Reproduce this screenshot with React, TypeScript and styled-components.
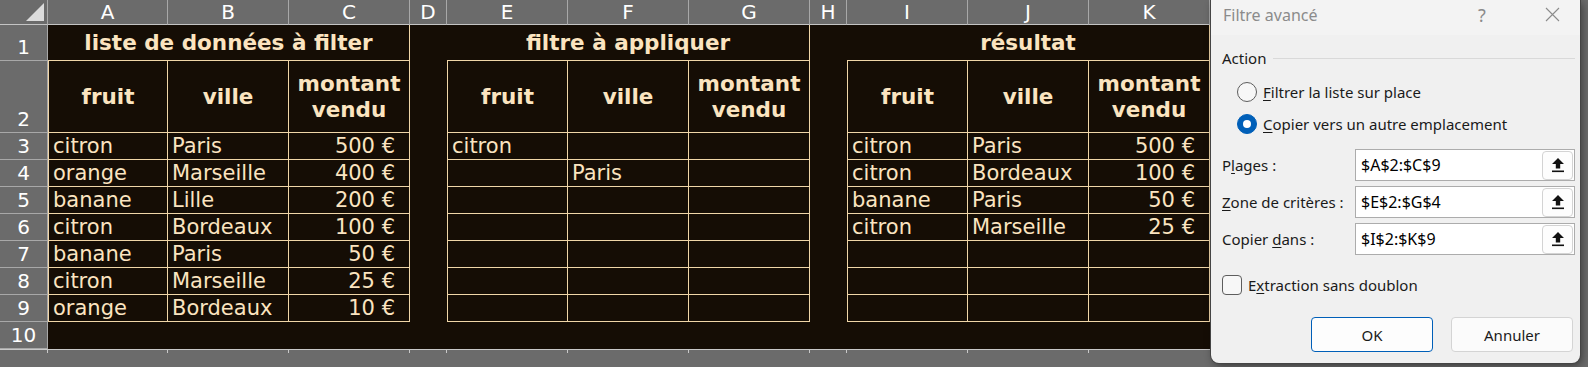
import React from 'react'
import styled, { createGlobalStyle } from 'styled-components'

const GlobalStyle = createGlobalStyle`
  html, body {
    margin: 0;
    padding: 0;
    background: #6b6b6b;
  }
  body {
    width: 1588px;
    height: 367px;
    overflow: hidden;
  }
`

const PEACH = '#f0d6a8'
const INK = '#fbe4c0'
const DARK = '#150d05'
const HEAD = '#6b6b6b'
const HEAD_LINE = '#a8a8a8'

interface CellProps {
  $first?: boolean
  $boxed?: boolean
  $align?: 'left' | 'right' | 'center'
  $bold?: boolean
  $span?: number
}

const Screen = styled.div`
  position: relative;
  width: 1588px;
  height: 367px;
  background: ${HEAD};
`

const Sheet = styled.div`
  display: grid;
  grid-template-columns: 48px 120px 121px 121px 37px repeat(3, 121px) 37px repeat(3, 121px);
  grid-template-rows: 25px 36px 72px repeat(8, 27px) 1fr;
  width: 1210px;
  height: 367px;
  font-family: "DejaVu Sans", Verdana, sans-serif;
`

const Corner = styled.div`
  position: relative;
  background: ${HEAD};
  border-right: 1px solid ${HEAD_LINE};
  border-bottom: 1px solid #c4c4c4;

  &::after {
    content: "";
    position: absolute;
    right: 3px;
    bottom: 3px;
    width: 0;
    height: 0;
    border-left: 18px solid transparent;
    border-bottom: 18px solid #dcdcdc;
  }
`

const ColHead = styled.div`
  display: flex;
  align-items: center;
  justify-content: center;
  background: ${HEAD};
  color: #ffffff;
  font-size: 20px;
  border-right: 1px solid ${HEAD_LINE};
  border-bottom: 1px solid #c4c4c4;
  box-sizing: border-box;
`

const RowHead = styled.div`
  display: flex;
  align-items: flex-end;
  justify-content: center;
  background: ${HEAD};
  color: #ffffff;
  font-size: 20px;
  line-height: 25px;
  border-right: 1px solid ${HEAD_LINE};
  border-bottom: 1px solid ${HEAD_LINE};
  box-sizing: border-box;
`

const Cell = styled.div<CellProps>`
  display: flex;
  align-items: center;
  justify-content: ${p => (p.$align === 'right' ? 'flex-end' : p.$align === 'center' ? 'center' : 'flex-start')};
  text-align: center;
  grid-column: span ${p => p.$span ?? 1};
  box-sizing: border-box;
  background: ${DARK};
  color: ${INK};
  font-size: ${p => (p.$bold ? '21.5px' : '21px')};
  font-weight: ${p => (p.$bold ? 'bold' : 'normal')};
  line-height: 26px;
  white-space: nowrap;
  overflow: hidden;
  padding: ${p => (p.$align === 'right' ? '0 14px 0 0' : p.$align === 'center' ? '0' : '0 0 0 4px')};
  border-right: ${p => (p.$boxed ? `1px solid ${PEACH}` : 'none')};
  border-bottom: ${p => (p.$boxed ? `1px solid ${PEACH}` : 'none')};
  border-left: ${p => (p.$boxed && p.$first ? `1px solid ${PEACH}` : 'none')};
`

const Blank = styled.div`
  position: relative;
  background: ${HEAD};
  border-top: 1px solid #c8c8c8;

  &::before {
    content: "";
    position: absolute;
    left: -1px;
    top: 0;
    width: 1px;
    height: 3px;
    background: #c8c8c8;
  }
`

/* ---------- dialog ---------- */

const Dialog = styled.div`
  position: absolute;
  left: 1211px;
  top: 0;
  width: 369px;
  height: 363px;
  display: flex;
  flex-direction: column;
  background: #f0f0f0;
  border-radius: 0 0 8px 8px;
  box-shadow: 0 0 0 1px #454545, 2px 3px 8px rgba(0, 0, 0, 0.45);
  font-family: "Segoe UI", "Noto Sans", sans-serif;
  font-size: 15px;
  color: #1a1a1a;
  overflow: hidden;
`

const TitleBar = styled.div`
  display: flex;
  align-items: center;
  height: 35px;
  padding: 0 5px 6px 12px;
  box-sizing: border-box;
  background: #f3f3f3;
  color: #8b8b8b;
  font-size: 16px;
`

const TitleText = styled.div`
  flex: 1;
`

const Help = styled.div`
  width: 24px;
  text-align: center;
  font-size: 18px;
  margin-right: 35px;
`

const Close = styled.div`
  width: 46px;
  display: flex;
  justify-content: center;
`

const Body = styled.div`
  display: flex;
  flex-direction: column;
  padding: 0 5px 0 11px;
`

const GroupRow = styled.div`
  display: flex;
  align-items: center;
  height: 20px;
  margin-top: 13px;
`

const GroupLine = styled.div`
  flex: 1;
  height: 1px;
  margin-left: 7px;
  background: #d9d9d9;
`

const OptionRow = styled.div<{ $top?: number }>`
  display: flex;
  align-items: center;
  height: 32px;
  margin-top: ${p => p.$top ?? 0}px;
  padding-left: 15px;
`

const Radio = styled.span<{ $on?: boolean }>`
  display: flex;
  flex-shrink: 0;
  align-items: center;
  justify-content: center;
  width: 20px;
  height: 20px;
  box-sizing: border-box;
  border-radius: 50%;
  margin-right: 6px;
  border: 1px solid ${p => (p.$on ? '#005fb8' : '#5d5d5d')};
  background: ${p => (p.$on ? '#005fb8' : '#f7f7f7')};

  &::after {
    content: "";
    display: ${p => (p.$on ? 'block' : 'none')};
    width: 8px;
    height: 8px;
    border-radius: 50%;
    background: #ffffff;
  }
`

const U = styled.span`
  text-decoration: underline;
  text-underline-offset: 2px;
`

const FieldRow = styled.div<{ $top: number }>`
  display: flex;
  align-items: center;
  height: 32px;
  margin-top: ${p => p.$top}px;
`

const FieldLabel = styled.div`
  width: 133px;
`

const Input = styled.div`
  flex: 1;
  display: flex;
  align-items: center;
  height: 32px;
  box-sizing: border-box;
  padding: 0 1px 0 5px;
  border: 1px solid #acacac;
  background: #ffffff;
  font-size: 16px;
  color: #000;
`

const InputValue = styled.div`
  flex: 1;
`

const PickButton = styled.div`
  display: flex;
  align-items: center;
  justify-content: center;
  width: 31px;
  height: 29px;
  box-sizing: border-box;
  border: 1px solid #d3d3d3;
  border-radius: 4px;
  background: #fdfdfd;
`

const CheckRow = styled.div`
  display: flex;
  align-items: center;
  height: 20px;
  margin-top: 20px;
`

const Check = styled.span`
  flex-shrink: 0;
  width: 20px;
  height: 20px;
  box-sizing: border-box;
  border: 1px solid #5d5d5d;
  border-radius: 4px;
  background: #f7f7f7;
  margin-right: 6px;
`

const ButtonRow = styled.div`
  display: flex;
  justify-content: flex-end;
  gap: 18px;
  margin-top: 22px;
  padding-right: 2px;
`

const Button = styled.div<{ $primary?: boolean }>`
  display: flex;
  align-items: center;
  justify-content: center;
  width: 122px;
  height: 35px;
  box-sizing: border-box;
  border-radius: 4px;
  border: 1px solid ${p => (p.$primary ? '#005fb8' : '#d4d4d4')};
  background: ${p => (p.$primary ? '#fdfdfd' : '#fbfbfb')};
  font-size: 15px;
`

const UpArrow = () => (
  <svg width="12" height="15" viewBox="0 0 12 15">
    <polygon points="6,0 12,6 8.2,6 8.2,10.5 3.8,10.5 3.8,6 0,6" fill="#111" />
    <rect x="0" y="12.5" width="12" height="1.6" fill="#111" />
  </svg>
)

const CloseIcon = () => (
  <svg width="15" height="15" viewBox="0 0 15 15">
    <path d="M1 1 L14 14 M14 1 L1 14" stroke="#8b8b8b" strokeWidth="1.1" fill="none" />
  </svg>
)

/* ---------- data ---------- */

type Row = [string, string, string]

const tables: { title: string; rows: Row[] }[] = [
  {
    title: 'liste de données à filter',
    rows: [
      ['citron', 'Paris', '500 €'],
      ['orange', 'Marseille', '400 €'],
      ['banane', 'Lille', '200 €'],
      ['citron', 'Bordeaux', '100 €'],
      ['banane', 'Paris', '50 €'],
      ['citron', 'Marseille', '25 €'],
      ['orange', 'Bordeaux', '10 €'],
    ],
  },
  {
    title: 'filtre à appliquer',
    rows: [
      ['citron', '', ''],
      ['', 'Paris', ''],
      ['', '', ''],
      ['', '', ''],
      ['', '', ''],
      ['', '', ''],
      ['', '', ''],
    ],
  },
  {
    title: 'résultat',
    rows: [
      ['citron', 'Paris', '500 €'],
      ['citron', 'Bordeaux', '100 €'],
      ['banane', 'Paris', '50 €'],
      ['citron', 'Marseille', '25 €'],
      ['', '', ''],
      ['', '', ''],
      ['', '', ''],
    ],
  },
]

const COLS = ['A', 'B', 'C', 'D', 'E', 'F', 'G', 'H', 'I', 'J', 'K']

export default function App() {
  const cells: React.ReactNode[] = []

  cells.push(<Corner key="corner" />)
  COLS.forEach(c => cells.push(<ColHead key={`h${c}`}>{c}</ColHead>))

  // row 1: titles
  cells.push(<RowHead key="r1">1</RowHead>)
  tables.forEach((t, i) => {
    cells.push(
      <Cell key={`t${i}`} $span={3} $boxed $align="center" $bold>
        {t.title}
      </Cell>
    )
    if (i < 2) cells.push(<Cell key={`g1${i}`} />)
  })

  // row 2: column headers
  cells.push(<RowHead key="r2">2</RowHead>)
  tables.forEach((_, i) => {
    cells.push(<Cell key={`a${i}`} $first $boxed $align="center" $bold>fruit</Cell>)
    cells.push(<Cell key={`b${i}`} $boxed $align="center" $bold>ville</Cell>)
    cells.push(
      <Cell key={`c${i}`} $boxed $align="center" $bold>
        montant
        <br />
        vendu
      </Cell>
    )
    if (i < 2) cells.push(<Cell key={`g2${i}`} />)
  })

  // rows 3 to 9
  for (let r = 0; r < 7; r++) {
    cells.push(<RowHead key={`r${r + 3}`}>{r + 3}</RowHead>)
    tables.forEach((t, i) => {
      const [fruit, ville, montant] = t.rows[r]
      cells.push(<Cell key={`${r}a${i}`} $first $boxed>{fruit}</Cell>)
      cells.push(<Cell key={`${r}b${i}`} $boxed>{ville}</Cell>)
      cells.push(<Cell key={`${r}c${i}`} $boxed $align="right">{montant}</Cell>)
      if (i < 2) cells.push(<Cell key={`g${r}${i}`} />)
    })
  }

  // row 10
  cells.push(<RowHead key="r10">10</RowHead>)
  COLS.forEach(c => cells.push(<Cell key={`e${c}`} />))

  // row 11, cut off
  cells.push(<Blank key="r11" />)
  COLS.forEach(c => cells.push(<Blank key={`f${c}`} />))

  return (
    <>
      <GlobalStyle />
      <Screen>
        <Sheet>{cells}</Sheet>

        <Dialog>
          <TitleBar>
            <TitleText>Filtre avancé</TitleText>
            <Help>?</Help>
            <Close>
              <CloseIcon />
            </Close>
          </TitleBar>
          <Body>
            <GroupRow>
              Action
              <GroupLine />
            </GroupRow>
            <OptionRow $top={8}>
              <Radio />
              <span>
                <U>F</U>iltrer la liste sur place
              </span>
            </OptionRow>
            <OptionRow>
              <Radio $on />
              <span>
                <U>C</U>opier vers un autre emplacement
              </span>
            </OptionRow>

            <FieldRow $top={9}>
              <FieldLabel>
                P<U>l</U>ages :
              </FieldLabel>
              <Input>
                <InputValue>$A$2:$C$9</InputValue>
                <PickButton>
                  <UpArrow />
                </PickButton>
              </Input>
            </FieldRow>
            <FieldRow $top={5}>
              <FieldLabel>
                <U>Z</U>one de critères :
              </FieldLabel>
              <Input>
                <InputValue>$E$2:$G$4</InputValue>
                <PickButton>
                  <UpArrow />
                </PickButton>
              </Input>
            </FieldRow>
            <FieldRow $top={5}>
              <FieldLabel>
                Copier <U>d</U>ans :
              </FieldLabel>
              <Input>
                <InputValue>$I$2:$K$9</InputValue>
                <PickButton>
                  <UpArrow />
                </PickButton>
              </Input>
            </FieldRow>

            <CheckRow>
              <Check />
              <span>
                E<U>x</U>traction sans doublon
              </span>
            </CheckRow>

            <ButtonRow>
              <Button $primary>OK</Button>
              <Button>Annuler</Button>
            </ButtonRow>
          </Body>
        </Dialog>
      </Screen>
    </>
  )
}
